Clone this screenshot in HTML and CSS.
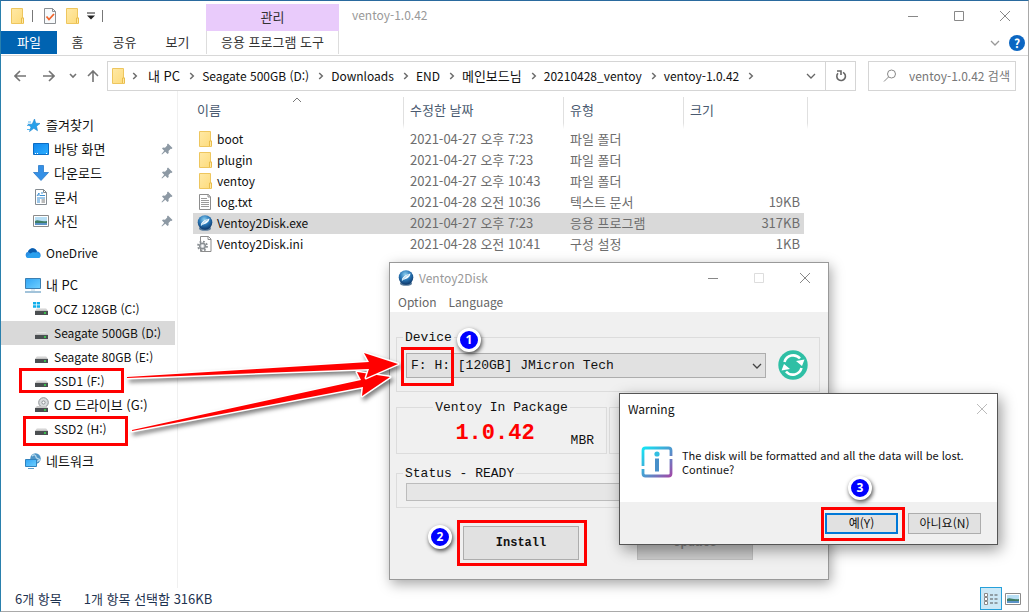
FILE: index.html
```html
<!DOCTYPE html>
<html lang="ko">
<head>
<meta charset="utf-8">
<title>ventoy-1.0.42</title>
<link rel="stylesheet" href="styles.css">
</head>
<body>
<svg class="defs" aria-hidden="true">
  <defs>
    <linearGradient id="gFolder" x1="0" y1="0" x2="1" y2="1"><stop offset="0" stop-color="#ffe9a6"/><stop offset="1" stop-color="#fddb7b"/></linearGradient>
    <linearGradient id="gScreen" x1="0" y1="0" x2="1" y2="1"><stop offset="0" stop-color="#2fa4f5"/><stop offset="1" stop-color="#6fd0ff"/></linearGradient>
    <linearGradient id="gDesk" x1="0" y1="0" x2="1" y2="1"><stop offset="0" stop-color="#0f86ee"/><stop offset="1" stop-color="#2fb0ff"/></linearGradient>
    <linearGradient id="gInfo" x1="0" y1="0" x2="1" y2="1"><stop offset="0" stop-color="#16e4f4"/><stop offset=".5" stop-color="#4a9bd0"/><stop offset="1" stop-color="#a04aa8"/></linearGradient>
    <linearGradient id="gDrive" x1="0" y1="0" x2="0" y2="1"><stop offset="0" stop-color="#f2f2f2"/><stop offset="1" stop-color="#b9b9b9"/></linearGradient>
    <radialGradient id="gBall" cx=".45" cy=".3" r=".7"><stop offset="0" stop-color="#8fd0f0"/><stop offset=".5" stop-color="#2b79b8"/><stop offset="1" stop-color="#0b3568"/></radialGradient>
  </defs>
  <symbol id="folder" viewBox="0 0 16 16"><path d="M2.500.5h11v9.500h1v5.500H2.500z" fill="url(#gFolder)" stroke="#eec65e"/><path d="M12.500 15v-5h2v5" fill="#ffe9a6" stroke="#e9bd4b"/></symbol>
  <symbol id="check" viewBox="0 0 16 16"><path d="M2.500.5h8l3 3v12h-11z" fill="#f7fafc" stroke="#8b8f93"/><path d="M10.500.5v3h3" fill="none" stroke="#8b8f93"/><path d="M4.500 8.500l2.500 3 5-5.500" fill="none" stroke="#f0642b" stroke-width="1.800"/></symbol>
  <symbol id="text" viewBox="0 0 16 16"><path d="M2.500.5h9l2 2.500v12.500h-11z" fill="#fff" stroke="#8d8d8d"/><path d="M11 .5V3h2.500" fill="none" stroke="#8d8d8d"/><path d="M4 4.500h6M4 6.500h8M4 8.500h8M4 10.500h8M4 12.500h8" stroke="#9b9b9b"/></symbol>
  <symbol id="ini" viewBox="0 0 16 16"><path d="M3.500.5h8l2.500 2.500v12.500h-10.500z" fill="#fff" stroke="#8d8d8d"/><path d="M11 .5V3.500h3" fill="none" stroke="#8d8d8d"/><circle cx="5.500" cy="10" r="4.500" fill="none" stroke="#8a8f93" stroke-width="1.800" stroke-dasharray="1.800 1.730"/><circle cx="5.500" cy="10" r="2.800" fill="#d7dadd" stroke="#8a8f93" stroke-width="1.500"/><circle cx="5.500" cy="10" r="1" fill="#fff"/></symbol>
  <symbol id="ball" viewBox="0 0 16 16"><ellipse cx="8" cy="13.500" rx="6" ry="2.300" fill="#567a9b"/><circle cx="8" cy="7.500" r="7.300" fill="url(#gBall)"/><path d="M4 11c-.5-2 .5-3.500 2.500-5s3.500-2 6-2.500c-.2 2-1.500 4-3.500 5S5.500 9.500 4 11z" fill="#f4fbff"/><path d="M4 11c2-3 4-5 7-6.500" fill="none" stroke="#7fb8dc" stroke-width=".7"/></symbol>
  <symbol id="star" viewBox="0 0 16 16"><path d="M9.500 2l1.200 4.200 4.300.3-3.500 2.700 1 4.500-3.700-2.400L4.500 14.500 6 10 2.800 7.200h4.400z" fill="#27a0ea" stroke="#1b85cf" stroke-width=".6"/><path d="M3 5h3M2 8.500h2M2 12.500h3" stroke="#57b8f0"/></symbol>
  <symbol id="desk" viewBox="0 0 16 16"><path d="M.5 2.500h15v11H.5z" fill="url(#gDesk)" stroke="#0b6cc4"/><path d="M2 12.500h1m1 0h1m8 0h1" stroke="#fff"/></symbol>
  <symbol id="down" viewBox="0 0 16 16"><path d="M5.500.5h5v7h5L8 15.500.5 7.500h5z" fill="#3490e6" stroke="#2a7ac9" stroke-width=".8"/></symbol>
  <symbol id="doc" viewBox="0 0 16 16"><path d="M2.500.5h8l3 3v12h-11z" fill="#fff" stroke="#848b91"/><path d="M10.500.5v3h3" fill="none" stroke="#848b91"/><path d="M8 4h2M7 6.500h5M4 9h8M4 11h3M4 13h3" stroke="#3b8fd4"/><path d="M4 7l2-3v3" fill="none" stroke="#3b8fd4"/><path d="M8.500 11h3.500M8.500 13h3.500" stroke="#777"/></symbol>
  <symbol id="pic" viewBox="0 0 16 16"><path d="M.5 2.500h15v11H.5z" fill="#fff" stroke="#8b8b8b"/><path d="M2 4h12v8H2z" fill="#b8dff5"/><path d="M2 8c3-2 5 1 12 0v2H2z" fill="#3f7d65"/><path d="M2 10h12v2H2z" fill="#5b93c8"/></symbol>
  <symbol id="cloud" viewBox="0 0 16 16"><path d="M3 13a3.200 3.200 0 0 1 0-6.200C4.500 2.500 10 2 12 6.500c4 0 5 5.500 1.500 6.500z" fill="#2b8fe3"/><path d="M3 6.800C4.500 2.500 10 2 12 6.500L8 10z" fill="#0b5cad"/><path d="M1 12l6-4.500c3-1 7 1 8.500 3.500-.5 1.500-1 2-2 2H3z" fill="#2aa0ee"/></symbol>
  <symbol id="pc" viewBox="0 0 16 16"><path d="M.5 1.500h15v10H.5z" fill="url(#gScreen)" stroke="#3c7fb1"/><path d="M0 15h16" stroke="#7aa9cb" stroke-width="1.400"/><path d="M6 13h4" stroke="#b9d3e4"/></symbol>
  <symbol id="drive" viewBox="0 0 16 16"><path d="M4 7h9l2 3H2z" fill="url(#gDrive)"/><path d="M2 10h13v4H2z" fill="#4b4f52"/><path d="M11 12h2" stroke="#36e04c" stroke-width="1.600"/></symbol>
  <symbol id="win" viewBox="0 0 16 16"><use href="#drive"/><path d="M0 1h3v2.500H0zM3.700 1H7v2.500H3.700zM0 4.200h3v2.500H0zM3.700 4.200H7v2.500H3.700z" fill="#10aeea"/></symbol>
  <symbol id="cd" viewBox="0 0 16 16"><circle cx="10.500" cy="5.500" r="4.800" fill="#d9dcde" stroke="#8d9194"/><circle cx="10.500" cy="5.500" r="1.600" fill="#fff" stroke="#8d9194"/><path d="M4 9h9l2 2H2z" fill="#c9c9c9"/><path d="M2 11h13v4H2z" fill="#4b4f52"/><path d="M11 13h2" stroke="#36e04c" stroke-width="1.600"/></symbol>
  <symbol id="net" viewBox="0 0 16 16"><circle cx="10.500" cy="5.500" r="5.200" fill="#4d94c6"/><path d="M7 3c2-2 4-1 4 1s3 1 4 3M11 10c0-2 2-2 4-3" fill="none" stroke="#b9dbee" stroke-width="1.300"/><path d="M.5 6.500h11v7H.5z" fill="url(#gScreen)" stroke="#3182bd"/><path d="M3 15.500h6" stroke="#5b9cc8"/></symbol>
  <symbol id="pin" viewBox="0 0 12 12"><path d="M7 .5L11.500 5l-1 1-.8-.2-2.200 2.200.2 2-1.200 1L4.300 8.800 1 11.500l-.5-.5 2.700-3.300L1 5.500l1-1 2 .2 2.200-2.200L6 1.500z" fill="#8d99a4"/></symbol>
  <symbol id="chev" viewBox="0 0 6 8"><path d="M1.200 1L4.300 4 1.200 7" fill="none" stroke="#6d6d6d" stroke-width="1.500"/></symbol>
  <symbol id="vee" viewBox="0 0 10 6"><path d="M1 1l4 4 4-4" fill="none" stroke="currentColor" stroke-width="1.300"/></symbol>
  <symbol id="min" viewBox="0 0 10 10"><path d="M0 5.500h10" stroke="currentColor"/></symbol>
  <symbol id="max" viewBox="0 0 10 10"><path d="M.5.500h9v9h-9z" fill="none" stroke="currentColor"/></symbol>
  <symbol id="close" viewBox="0 0 10 10"><path d="M0 0l10 10M10 0L0 10" fill="none" stroke="currentColor"/></symbol>
</svg>

<div class="explorer">
  <header class="titlebar">
    <div class="quick">
      <svg class="ico"><use href="#folder"/></svg><i class="bar"></i>
      <svg class="ico"><use href="#check"/></svg>
      <svg class="ico"><use href="#folder"/></svg>
      <svg class="more" viewBox="0 0 8 8"><path d="M0 1h8" stroke="#222"/><path d="M0 3.500h8l-4 4z" fill="#222"/></svg><i class="bar"></i>
    </div>
    <div class="context">관리</div>
    <h1 class="title">ventoy-1.0.42</h1>
    <div class="winbtns">
      <button aria-label="최소화"><svg><use href="#min"/></svg></button>
      <button aria-label="최대화"><svg><use href="#max"/></svg></button>
      <button aria-label="닫기"><svg><use href="#close"/></svg></button>
    </div>
  </header>
  <div class="ribbon">
    <button class="tab file">파일</button>
    <button class="tab home">홈</button>
    <button class="tab">공유</button>
    <button class="tab">보기</button>
    <button class="tab tools">응용 프로그램 도구</button>
    <div class="ribbon-end">
      <button aria-label="리본 확장"><svg class="vee"><use href="#vee"/></svg></button>
      <button class="help" aria-label="도움말">?</button>
    </div>
  </div>
  <div class="navrow">
    <div class="arrows">
      <button aria-label="뒤로"><svg viewBox="0 0 12 12"><path d="M12 6H1M6 1L1 6l5 5"/></svg></button>
      <button aria-label="앞으로"><svg viewBox="0 0 12 12"><path d="M0 6h11M6 1l5 5-5 5"/></svg></button>
      <button class="recent" aria-label="최근 위치"><svg viewBox="0 0 10 6"><path d="M2 1l3 3 3-3"/></svg></button>
      <button aria-label="위로"><svg viewBox="0 0 12 12"><path d="M6 12V1M1 6l5-5 5 5"/></svg></button>
    </div>
    <div class="address">
      <svg class="ico"><use href="#folder"/></svg>
      <svg class="chev first"><use href="#chev"/></svg><span class="ko">내 PC</span>
      <svg class="chev"><use href="#chev"/></svg><span>Seagate 500GB (D:)</span>
      <svg class="chev"><use href="#chev"/></svg><span>Downloads</span>
      <svg class="chev"><use href="#chev"/></svg><span>END</span>
      <svg class="chev"><use href="#chev"/></svg><span class="ko">메인보드님</span>
      <svg class="chev"><use href="#chev"/></svg><span>20210428_ventoy</span>
      <svg class="chev"><use href="#chev"/></svg><span>ventoy-1.0.42</span>
      <svg class="chev"><use href="#chev"/></svg>
      <button class="drop" aria-label="이전 위치"><svg class="vee"><use href="#vee"/></svg></button>
      <button class="reload" aria-label="새로 고침"><svg viewBox="0 0 12 12"><path d="M3 3.300a4.300 4.300 0 1 0 5-.9" /><path d="M2 1h4v4"/></svg></button>
    </div>
    <label class="search">
      <svg viewBox="0 0 14 14"><circle cx="8.500" cy="5" r="4"/><path d="M5.500 8L1 12.500"/></svg>
      <input type="text" placeholder="ventoy-1.0.42 검색" aria-label="검색">
    </label>
  </div>

  <main class="main">
    <nav class="side">
      <ul>
        <li><svg class="ico"><use href="#star"/></svg>즐겨찾기</li>
        <li class="sub"><svg class="ico"><use href="#desk"/></svg>바탕 화면<svg class="pin"><use href="#pin"/></svg></li>
        <li class="sub"><svg class="ico"><use href="#down"/></svg>다운로드<svg class="pin"><use href="#pin"/></svg></li>
        <li class="sub"><svg class="ico"><use href="#doc"/></svg>문서<svg class="pin"><use href="#pin"/></svg></li>
        <li class="sub"><svg class="ico"><use href="#pic"/></svg>사진<svg class="pin"><use href="#pin"/></svg></li>
      </ul>
      <ul><li class="en"><svg class="ico"><use href="#cloud"/></svg>OneDrive</li></ul>
      <ul>
        <li><svg class="ico"><use href="#pc"/></svg>내 PC</li>
        <li class="sub en"><svg class="ico"><use href="#win"/></svg>OCZ 128GB (C:)</li>
        <li class="sub en current"><svg class="ico"><use href="#drive"/></svg>Seagate 500GB (D:)</li>
        <li class="sub en"><svg class="ico"><use href="#drive"/></svg>Seagate 80GB (E:)</li>
        <li class="sub en"><svg class="ico"><use href="#drive"/></svg>SSD1 (F:)</li>
        <li class="sub"><svg class="ico"><use href="#cd"/></svg>CD 드라이브 (G:)</li>
        <li class="sub en"><svg class="ico"><use href="#drive"/></svg>SSD2 (H:)</li>
      </ul>
      <ul><li><svg class="ico"><use href="#net"/></svg>네트워크</li></ul>
    </nav>
    <section class="files">
      <table>
        <colgroup><col class="c-name"><col class="c-date"><col class="c-type"><col class="c-size"></colgroup>
        <thead><tr><th>이름<svg class="sort" viewBox="0 0 10 6"><path d="M1 5l4-4 4 4"/></svg></th><th>수정한 날짜</th><th>유형</th><th>크기</th></tr></thead>
        <tbody>
          <tr><td><svg class="ico"><use href="#folder"/></svg>boot</td><td>2021-04-27 오후 7:23</td><td>파일 폴더</td><td></td></tr>
          <tr><td><svg class="ico"><use href="#folder"/></svg>plugin</td><td>2021-04-27 오후 7:23</td><td>파일 폴더</td><td></td></tr>
          <tr><td><svg class="ico"><use href="#folder"/></svg>ventoy</td><td>2021-04-27 오후 10:43</td><td>파일 폴더</td><td></td></tr>
          <tr><td><svg class="ico"><use href="#text"/></svg>log.txt</td><td>2021-04-28 오전 10:36</td><td>텍스트 문서</td><td>19KB</td></tr>
          <tr class="selected"><td><svg class="ico"><use href="#ball"/></svg>Ventoy2Disk.exe</td><td>2021-04-27 오후 7:23</td><td>응용 프로그램</td><td>317KB</td></tr>
          <tr><td><svg class="ico"><use href="#ini"/></svg>Ventoy2Disk.ini</td><td>2021-04-28 오전 10:41</td><td>구성 설정</td><td>1KB</td></tr>
        </tbody>
      </table>
    </section>
  </main>
  <footer class="status">
    <span>6개 항목</span><span>1개 항목 선택함 316KB</span>
    <div class="views">
      <button class="on" aria-label="자세히"><svg viewBox="0 0 18 16"><path d="M2.500 2.500h3v3h-3zM2.500 6.500h3v3h-3zM2.500 10.500h3v3h-3z" fill="#fff" stroke="#8a8a8a"/><path d="M8 4h3m1.500 0h3M8 8h3m1.500 0h3M8 12h3m1.500 0h3" stroke="#555"/></svg></button>
      <button aria-label="큰 아이콘"><svg viewBox="0 0 16 16"><use href="#pic"/></svg></button>
    </div>
  </footer>
</div>

<section class="ventoy" aria-label="Ventoy2Disk">
  <header class="v-title">
    <svg class="ico"><use href="#ball"/></svg><span>Ventoy2Disk</span>
    <div class="winbtns">
      <button aria-label="Minimize"><svg><use href="#min"/></svg></button>
      <button aria-label="Maximize" disabled><svg><use href="#max"/></svg></button>
      <button aria-label="Close"><svg><use href="#close"/></svg></button>
    </div>
  </header>
  <div class="v-menu"><button>Option</button><button>Language</button></div>
  <div class="v-body">
    <fieldset class="device">
      <legend>Device</legend>
      <div class="device-row">
        <div class="combo">
          <select aria-label="Device"><option>F: H: [120GB] JMicron Tech</option></select>
          <svg class="vee"><use href="#vee"/></svg>
        </div>
        <button class="refresh" aria-label="Refresh"><svg viewBox="0 0 30 30"><circle cx="15" cy="15" r="14.700" fill="#2fbfa5"/><path d="M6.500 12a9 9 0 0 1 15.500-3.500M23.500 18a9 9 0 0 1-15.500 3.500" fill="none" stroke="#fff" stroke-width="2.600"/><path d="M18 11l6 5 2.500-6.500zM12 19l-6-5-2.500 6.500z" fill="#fff"/></svg></button>
      </div>
    </fieldset>
    <div class="versions">
      <fieldset><legend>Ventoy In Package</legend><div class="ver"><strong>1.0.42</strong><span>MBR</span></div></fieldset>
      <fieldset></fieldset>
    </div>
    <fieldset class="progress"><legend>Status - READY</legend><div class="track" role="progressbar" aria-label="Status"></div></fieldset>
    <div class="actions"><button>Install</button><button disabled>Update</button></div>
  </div>
</section>

<section class="warning" role="dialog" aria-label="Warning">
  <header><span>Warning</span><button aria-label="Close"><svg><use href="#close"/></svg></button></header>
  <div class="w-body">
    <svg viewBox="0 0 32 32"><path d="M2 13V4.500A2.500 2.500 0 0 1 4.500 2H27.500A2.500 2.500 0 0 1 30 4.500V10M2 23v4.500A2.500 2.500 0 0 0 4.500 30H27.500A2.500 2.500 0 0 0 30 27.500V13M2 10v10" fill="none" stroke="url(#gInfo)" stroke-width="2.800"/><circle cx="16" cy="8" r="2.600" fill="#32bfe2"/><path d="M16 12.500v13" stroke="#478fc9" stroke-width="4"/></svg>
    <p>The disk will be formatted and all the data will be lost.<br>Continue?</p>
  </div>
  <footer><button class="yes">예(Y)</button><button>아니요(N)</button></footer>
</section>

<div class="marks" aria-hidden="true">
  <svg class="pointers" viewBox="0 0 300 100">
    <g fill="#f00" stroke="#fff" stroke-width="3" stroke-linejoin="round" paint-order="stroke">
      <path d="M5 80L234 30l-4-8 33 5-28 19 1-9L5 81z"/>
      <path d="M0 27L242 12l-5-9 34 11-32 14 3-9L0 28z"/>
    </g>
  </svg>
  <div class="box ssd1"></div><div class="box ssd2"></div><div class="box letters"></div><div class="box install"></div><div class="box confirm"></div>
  <b class="badge n1">1</b><b class="badge n2">2</b><b class="badge n3">3</b>
</div>
</body>
</html>
```
FILE: styles.css
```css
* { box-sizing: border-box; }
body {
  margin: 0;
  position: relative;
  font: 13px/20px "Noto Sans CJK KR", sans-serif;
  color: #111;
  background: #fff;
  overflow: hidden;
}
button {
  font: inherit;
  color: inherit;
  background: none;
  border: 0;
  padding: 0;
  display: flex;
  align-items: center;
  justify-content: center;
}
ul { list-style: none; margin: 0; padding: 0; }
.defs { position: absolute; width: 0; height: 0; }
.ico { width: 16px; height: 16px; flex: none; }
.vee { width: 10px; height: 6px; }

.explorer {
  min-height: 100vh;
  display: flex;
  flex-direction: column;
  border: 1px solid #a9a9a9;
  border-top-color: #2a6a9e;
  border-left-color: #2a80ad;
}

.titlebar { display: flex; height: 30px; }
.quick { width: 205px; display: flex; align-items: center; padding-left: 8px; }
.quick .ico + .ico { margin-left: 6px; }
.bar { width: 1px; height: 12px; background: #777; margin: 0 9px 0 7px; }
.more { width: 8px; height: 8px; margin-left: 7px; }
.context {
  width: 133px;
  margin-top: 3px;
  padding-bottom: 2px;
  background: #e9cbfb;
  display: flex;
  align-items: center;
  justify-content: center;
  color: #333;
}
.title { flex: 1; margin: 0; padding-left: 13px; font-size: 12px; font-weight: 400; line-height: 28px; color: #999; }
.winbtns { display: flex; color: #888; }
.winbtns button { width: 46px; height: 29px; }
.winbtns svg { width: 10px; height: 10px; }
.winbtns button:disabled { color: #ddd; }

.ribbon { display: flex; height: 25px; border-bottom: 1px solid #d8d8d8; color: #333; }
.tab { width: 53px; height: 23px; padding-bottom: 2px; }
.tab.file { width: 56px; background: #0063b1; color: #fff; }
.tab.home { width: 41px; }
.tab.tools { width: 133px; margin-left: 2px; border: solid #ddd; border-width: 0 1px; }
.ribbon-end { margin-left: auto; display: flex; align-items: center; gap: 9px; padding-right: 3px; color: #999; }
.help { width: 16px; height: 16px; border-radius: 50%; background: #0b66c2; color: #fff; font-weight: 700; font-size: 12px; }

.navrow { display: flex; padding: 5px 12px 0 0; }
.arrows { width: 106px; padding-left: 12px; display: flex; align-items: center; }
.arrows button { width: 14px; margin-right: 15px; }
.arrows button:nth-child(2) { margin-right: 12px; }
.arrows .recent { width: 10px; margin-right: 8px; }
.arrows button:last-child { margin-right: 0; }
.arrows svg { width: 12px; fill: none; stroke: #747474; stroke-width: 1.6; }
.arrows .recent svg { width: 10px; }
.address {
  flex: 1;
  height: 30px;
  border: 1px solid #d5d5d5;
  display: flex;
  align-items: center;
  padding-left: 2px;
  white-space: nowrap;
  font-size: 12px;
}
.address .ko { font-size: 13px; }
.chev { width: 6px; height: 8px; margin: 0 7px 0 9px; flex: none; }
.chev.first { margin-left: 6px; margin-right: 10px; }
.drop { margin-left: auto; width: 28px; color: #666; }
.reload { width: 30px; height: 28px; border-left: 1px solid #d5d5d5; }
.reload svg { width: 12px; fill: none; stroke: #666; stroke-width: 1.6; }
.search {
  width: 148px;
  margin-left: 12px;
  border: 1px solid #d5d5d5;
  display: flex;
  align-items: center;
  padding-left: 14px;
}
.search svg { width: 14px; height: 14px; flex: none; fill: none; stroke: #888; }
.search input { width: 100%; min-width: 0; border: 0; outline: 0; padding: 0; margin-left: 12px; font: inherit; font-size: 12px; background: none; }
.search input::placeholder { color: #777; opacity: 1; }

.main { flex: 1; display: flex; }
.side {
  width: 177px;
  padding: 22px 2px 0 0;
  border-right: 1px solid #f0f0f0;
  display: flex;
  flex-direction: column;
  gap: 8px;
}
.side li { height: 24px; padding-left: 24px; display: flex; align-items: center; gap: 5px; white-space: nowrap; }
.side .sub { padding-left: 32px; }
.side .en { font-size: 12px; }
.side .current { background: #d9d9d9; }
.pin { width: 12px; height: 12px; margin-left: auto; margin-right: 2px; }

.files { flex: 1; padding: 6px 0 0 15px; }
table { table-layout: fixed; width: 615px; border-spacing: 0; }
.c-name { width: 210px; }
.c-date { width: 160px; }
.c-type { width: 120px; }
th {
  position: relative;
  height: 32px;
  padding: 0 0 0 6px;
  text-align: left;
  font-weight: 400;
  color: #4a5a70;
  border-left: 1px solid #e0e0e0;
  border-bottom: 6px solid #fff;
}
th:first-child { border-left: 0; padding-left: 4px; }
th:last-child { border-right: 1px solid #e0e0e0; }
.sort { position: absolute; left: 99px; top: 0; width: 10px; height: 6px; fill: none; stroke: #777; }
td { height: 21px; padding: 0 0 2px 7px; line-height: 19px; color: #6d6d6d; white-space: nowrap; }
td:first-child { display: flex; align-items: center; gap: 4px; padding-left: 4px; font-size: 12px; color: #111; }
td:last-child { text-align: right; padding-right: 4px; border-right: 4px solid #fff; }
.selected td { background-color: #d9d9d9; }

.status { height: 23px; display: flex; align-items: center; gap: 22px; padding: 0 7px 2px 14px; color: #1e3350; }
.views { margin-left: auto; display: flex; align-items: center; gap: 3px; }
.views button { height: 23px; width: 16px; }
.views svg { width: 16px; height: 16px; }
.views .on { width: 22px; background: #cce8f6; border: 1px solid #26a0da; }
.views .on svg { width: 18px; }

/* Ventoy2Disk window */
.ventoy {
  position: absolute;
  left: 389px;
  top: 262px;
  width: 440px;
  border: 1px solid #999;
  background: #f0f0f0;
  box-shadow: 2px 4px 12px rgba(0, 0, 0, .35);
  font-size: 12px;
}
.v-title { height: 29px; display: flex; align-items: center; gap: 5px; padding-left: 8px; background: #fff; color: #999; }
.v-title .winbtns { margin-left: auto; }
.v-menu { height: 20px; display: flex; gap: 12px; padding: 0 0 0 8px; background: #fff; color: #666; }
.v-body { padding: 17px 8px 19px 6px; font: 13px/18px "Liberation Mono", monospace; }
fieldset { margin: 0; min-width: 0; border: 1px solid #dcdcdc; padding: 0 9px; }
legend { padding: 0 2px; margin-left: -3px; height: 16px; }
.device { height: 63px; }
.device-row { display: flex; align-items: center; gap: 12px; padding-top: 5px; }
.combo { position: relative; flex: 1; }
.combo .vee { position: absolute; right: 4px; top: 10px; color: #444; }
select { appearance: none; width: 100%; height: 25px; padding: 1px 4px 0; font: inherit; color: #111; background: #e1e1e1; border: 1px solid #adadad; border-radius: 0; display: block; }
.refresh { width: 30px; height: 30px; margin-right: 2px; }
.refresh svg { width: 30px; height: 30px; }
.versions { display: grid; grid-template-columns: 1fr 1fr; gap: 2px; margin-top: 7px; }
.versions legend { margin: 0 auto; }
.versions fieldset { height: 55px; }
.versions fieldset:last-child { height: 47px; margin-top: 8px; }
.ver { display: flex; align-items: flex-start; justify-content: flex-end; padding: 7px 3px 0 0; }
.ver strong { font-size: 22px; line-height: 24px; color: #f00; margin-right: 36px; }
.ver span { padding-top: 10px; }
.progress { height: 43px; margin-top: 11px; }
.track { height: 18px; margin-top: 2px; background: #e6e6e6; border: 1px solid #bcbcbc; }
.actions { display: flex; gap: 58px; padding: 18px 0 0 67px; }
.actions button { width: 116px; height: 34px; background: #e1e1e1; border: 1px solid #adadad; font-size: 12px; font-weight: 700; }
.actions button:disabled { background: #ccc; border-color: #bfbfbf; color: #888; }

/* Message box */
.warning {
  position: absolute;
  left: 619px;
  top: 393px;
  width: 379px;
  border: 1px solid #555;
  background: #fff;
  box-shadow: 3px 5px 14px rgba(0, 0, 0, .4);
  font-size: 12px;
}
.warning header { height: 29px; display: flex; align-items: center; justify-content: space-between; padding: 0 10px 0 8px; }
.warning header svg { width: 10px; height: 10px; color: #bbb; display: block; }
.w-body { display: flex; gap: 9px; height: 79px; padding: 23px 0 0 21px; font-size: 11px; line-height: 14px; }
.w-body svg { width: 32px; height: 32px; flex: none; }
.w-body p { margin: 2px 0 0; }
.warning footer { height: 42px; background: #f0f0f0; display: flex; align-items: center; justify-content: flex-end; gap: 10px; padding-right: 16px; }
.warning footer button { width: 73px; height: 21px; background: #e1e1e1; border: 1px solid #adadad; }
.warning footer .yes { border: 2px solid #0078d7; }

/* Callouts drawn over the windows */
.marks { position: absolute; left: 0; top: 0; }
.pointers { position: absolute; left: 127px; top: 350px; width: 300px; height: 100px; filter: drop-shadow(2px 3px 2px rgba(0, 0, 0, .5)); }
.box { position: absolute; border: 3px solid #f00; }
.ssd1 { left: 19px; top: 368px; width: 105px; height: 25px; }
.ssd2 { left: 23px; top: 416px; width: 105px; height: 30px; }
.letters { left: 401px; top: 347px; width: 53px; height: 39px; }
.install { left: 457px; top: 520px; width: 130px; height: 46px; }
.confirm { left: 821px; top: 507px; width: 84px; height: 34px; }
.badge {
  position: absolute;
  width: 24px;
  height: 24px;
  border: 3px solid #fff;
  border-radius: 50%;
  background: #00f;
  color: #fff;
  font: 700 12px/18px "Open Sans", sans-serif;
  text-align: center;
  box-shadow: 1px 2px 4px rgba(0, 0, 0, .7);
}
.n1 { left: 457px; top: 328px; }
.n2 { left: 428px; top: 525px; }
.n3 { left: 848px; top: 476px; }
```
